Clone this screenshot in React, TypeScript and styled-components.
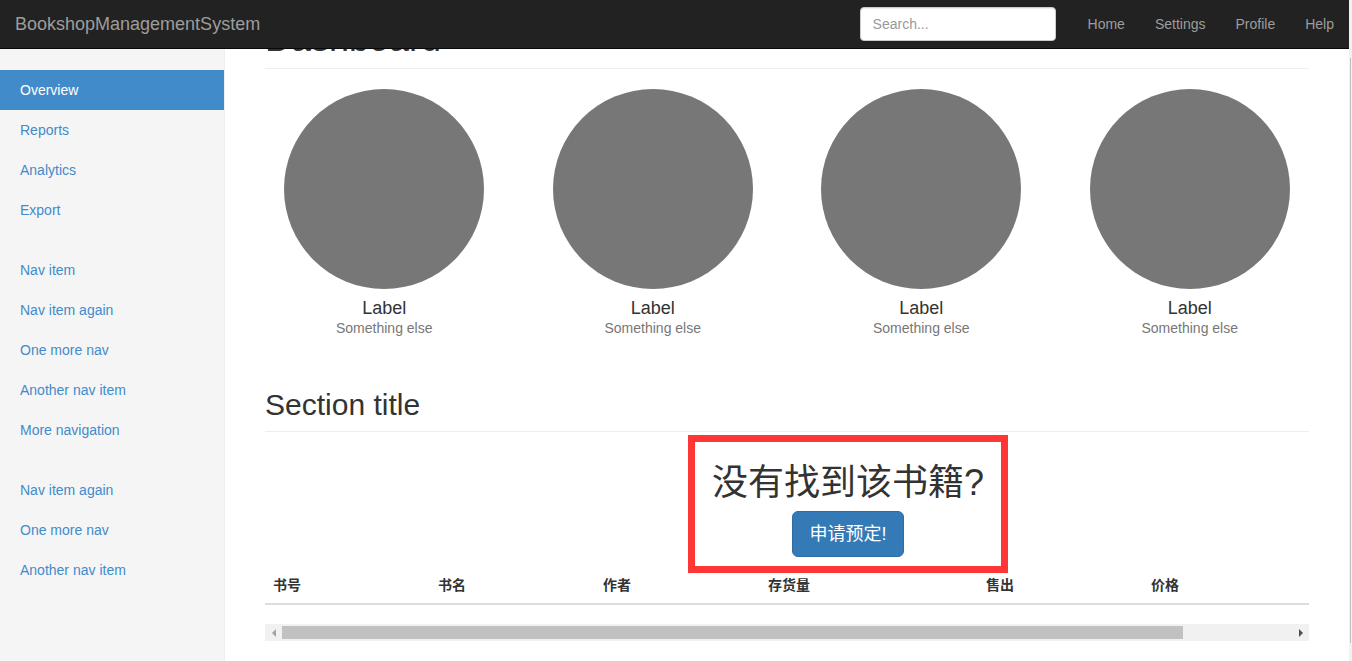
import React from "react";
import styled, { createGlobalStyle } from "styled-components";

const GlobalStyle = createGlobalStyle`
  * { box-sizing: border-box; }
  html, body { margin: 0; padding: 0; height: 100%; overflow: hidden; }
  body {
    font-family: "Liberation Sans", "Noto Sans CJK SC", Arial, sans-serif;
    font-size: 14px;
    line-height: 1.428571;
    color: #333;
    background: #fff;
  }
  ul { margin: 0; padding: 0; list-style: none; }
`;

const Viewport = styled.div`
  display: flex;
  height: 100vh;
  width: 100%;
`;

const Page = styled.div`
  position: relative;
  flex: 1;
  min-width: 0;
  display: flex;
  overflow: hidden;
`;

const Navbar = styled.nav`
  position: absolute;
  top: 0;
  left: 0;
  right: 0;
  z-index: 10;
  height: 49px;
  display: flex;
  align-items: flex-start;
  background: #222;
  border-bottom: 1px solid #080808;
`;

const Brand = styled.a`
  padding: 14px 15px;
  font-size: 18px;
  line-height: 20px;
  color: #9d9d9d;
  text-decoration: none;
`;

const SearchForm = styled.form`
  margin-left: auto;
  padding: 7px 17px 7px 15px;
`;

const SearchInput = styled.input`
  display: block;
  width: 196px;
  height: 34px;
  padding: 6px 12px;
  font-family: inherit;
  font-size: 14px;
  color: #555;
  background: #fff;
  border: 1px solid #ccc;
  border-radius: 4px;
  box-shadow: inset 0 1px 1px rgba(0, 0, 0, 0.075);
  outline: none;
  &::placeholder { color: #999; }
`;

const TopNav = styled.ul`
  display: flex;
`;

const TopLink = styled.a`
  display: block;
  padding: 14px 15px;
  line-height: 20px;
  color: #9d9d9d;
  text-decoration: none;
`;

const Sidebar = styled.aside`
  flex: 0 0 225px;
  padding-top: 70px;
  background: #f5f5f5;
  border-right: 1px solid #eee;
`;

const NavGroup = styled.ul`
  margin-bottom: 20px;
`;

const SideLink = styled.a<{ $active?: boolean }>`
  display: block;
  padding: 10px 20px;
  line-height: 20px;
  text-decoration: none;
  color: ${(p) => (p.$active ? "#fff" : "#428bca")};
  background: ${(p) => (p.$active ? "#428bca" : "transparent")};
`;

const Main = styled.main`
  flex: 1;
  min-width: 0;
  padding: 0 40px;
`;

const PageHeader = styled.h1`
  margin: 19px 0 20px;
  padding-bottom: 9px;
  font-size: 36px;
  line-height: 40px;
  font-weight: 500;
  color: #333;
  border-bottom: 1px solid #eee;
`;

const Placeholders = styled.div`
  display: grid;
  grid-template-columns: repeat(4, 1fr);
  margin: 0 -15px 29px;
  text-align: center;
`;

const Placeholder = styled.div`
  padding: 0 15px;
  margin-bottom: 20px;
`;

const Circle = styled.div`
  width: 200px;
  height: 200px;
  margin: 0 auto;
  border-radius: 50%;
  background: #777;
`;

const PlaceLabel = styled.h4`
  margin: 10px 0 0;
  font-size: 18px;
  line-height: 19.8px;
  font-weight: 500;
  color: #333;
`;

const Muted = styled.span`
  display: block;
  color: #777;
`;

const SubHeader = styled.h2`
  margin: 20px 0 10px;
  padding-bottom: 10px;
  font-size: 30px;
  line-height: 33px;
  font-weight: 500;
  color: #333;
  border-bottom: 1px solid #eee;
`;

const NoticeBox = styled.div`
  width: 320px;
  margin: -7px 0 -6px 423px;
  padding-bottom: 9px;
  border: 7px solid #fe3636;
  text-align: center;
`;

const NoticeTitle = styled.h1`
  margin: 21px 0 9px;
  font-size: 36px;
  line-height: 39.6px;
  font-weight: 400;
  color: #333;
`;

const OrderButton = styled.button`
  display: inline-block;
  padding: 10px 16px;
  font-family: inherit;
  font-size: 18px;
  line-height: 24px;
  font-weight: 400;
  color: #fff;
  background: #337ab7;
  border: 1px solid #2e6da4;
  border-radius: 6px;
`;

const TableScroll = styled.div`
  overflow: hidden;
`;

const Table = styled.table`
  width: 1171px;
  border-collapse: collapse;
  margin-bottom: 19px;
`;

const Th = styled.th<{ $w: number }>`
  width: ${(p) => p.$w}px;
  padding: 8px;
  line-height: 20px;
  text-align: left;
  font-weight: bold;
  color: #333;
  border-bottom: 2px solid #ddd;
`;

const HScrollbar = styled.div`
  display: flex;
  height: 17px;
  background: #f1f1f1;
`;

const ArrowButton = styled.div`
  flex: 0 0 17px;
  display: flex;
  align-items: center;
  justify-content: center;
`;

const Arrow = styled.span<{ $dir: "left" | "right"; $dim?: boolean }>`
  width: 0;
  height: 0;
  border-top: 4px solid transparent;
  border-bottom: 4px solid transparent;
  ${(p) =>
    p.$dir === "left"
      ? `border-right: 4px solid ${p.$dim ? "#a3a3a3" : "#505050"};`
      : `border-left: 4px solid ${p.$dim ? "#a3a3a3" : "#505050"};`}
`;

const HThumb = styled.div<{ $w: number }>`
  flex: 0 0 ${(p) => p.$w}px;
  margin: 2px 0;
  background: #c1c1c1;
`;

const Spacer = styled.div`
  flex: 1;
`;

const PageScrollbar = styled.div`
  flex: 0 0 3px;
  padding-left: 1px;
  background: #f1f1f1;
`;

const PageThumb = styled.div`
  width: 1px;
  height: 585px;
  margin-top: 58px;
  background: #c1c1c1;
`;

const groups: { label: string; active?: boolean }[][] = [
  [{ label: "Overview", active: true }, { label: "Reports" }, { label: "Analytics" }, { label: "Export" }],
  [
    { label: "Nav item" },
    { label: "Nav item again" },
    { label: "One more nav" },
    { label: "Another nav item" },
    { label: "More navigation" },
  ],
  [{ label: "Nav item again" }, { label: "One more nav" }, { label: "Another nav item" }],
];

const columns: { label: string; w: number }[] = [
  { label: "书号", w: 165 },
  { label: "书名", w: 165 },
  { label: "作者", w: 165 },
  { label: "存货量", w: 218 },
  { label: "售出", w: 165 },
  { label: "价格", w: 293 },
];

export default function App() {
  return (
    <>
      <GlobalStyle />
      <Viewport>
        <Page>
          <Navbar>
            <Brand href="#">BookshopManagementSystem</Brand>
            <SearchForm onSubmit={(e) => e.preventDefault()}>
              <SearchInput type="text" placeholder="Search..." />
            </SearchForm>
            <TopNav>
              {["Home", "Settings", "Profile", "Help"].map((t) => (
                <li key={t}>
                  <TopLink href="#">{t}</TopLink>
                </li>
              ))}
            </TopNav>
          </Navbar>

          <Sidebar>
            {groups.map((g, gi) => (
              <NavGroup key={gi}>
                {g.map((item, i) => (
                  <li key={i}>
                    <SideLink href="#" $active={item.active}>
                      {item.label}
                    </SideLink>
                  </li>
                ))}
              </NavGroup>
            ))}
          </Sidebar>

          <Main>
            <PageHeader>Dashboard</PageHeader>
            <Placeholders>
              {[0, 1, 2, 3].map((i) => (
                <Placeholder key={i}>
                  <Circle />
                  <PlaceLabel>Label</PlaceLabel>
                  <Muted>Something else</Muted>
                </Placeholder>
              ))}
            </Placeholders>

            <SubHeader>Section title</SubHeader>

            <NoticeBox>
              <NoticeTitle>没有找到该书籍?</NoticeTitle>
              <OrderButton type="button">申请预定!</OrderButton>
            </NoticeBox>

            <TableScroll>
              <Table>
                <thead>
                  <tr>
                    {columns.map((c) => (
                      <Th key={c.label} $w={c.w}>
                        {c.label}
                      </Th>
                    ))}
                  </tr>
                </thead>
              </Table>
            </TableScroll>
            <HScrollbar>
              <ArrowButton>
                <Arrow $dir="left" $dim />
              </ArrowButton>
              <HThumb $w={901} />
              <Spacer />
              <ArrowButton>
                <Arrow $dir="right" />
              </ArrowButton>
            </HScrollbar>
          </Main>
        </Page>
        <PageScrollbar>
          <PageThumb />
        </PageScrollbar>
      </Viewport>
    </>
  );
}
